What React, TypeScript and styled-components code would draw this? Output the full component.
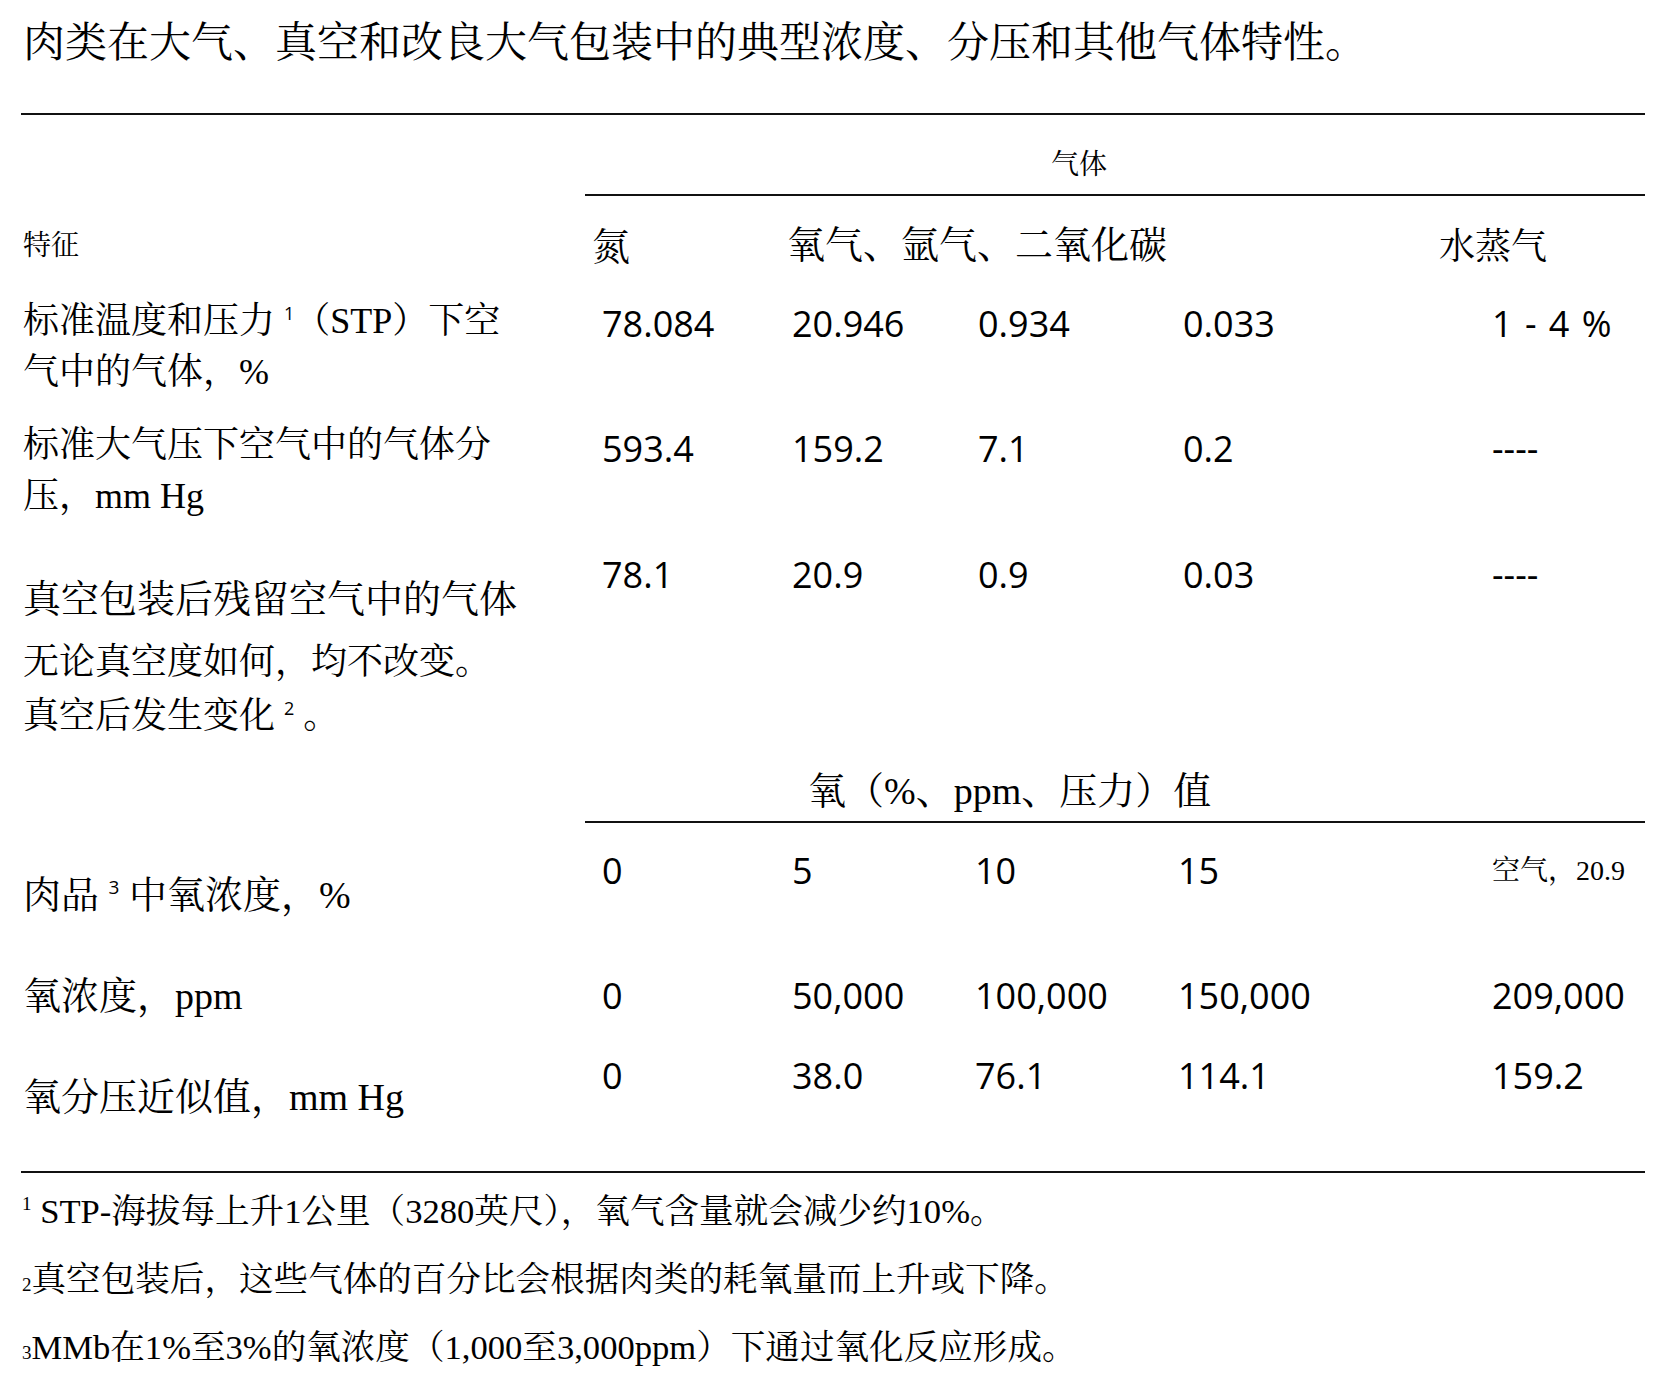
import React from 'react';
import styled, { createGlobalStyle } from 'styled-components';

const serif = `"Liberation Serif", "Noto Serif CJK SC", "Noto Sans CJK SC", serif`;
const sans = `"Open Sans", "Noto Sans", "Noto Sans CJK SC", sans-serif`;

const gasCols = '564px 190px 186px 205px 309px 1fr';
const oxygenCols = '564px 190px 183px 203px 314px 1fr';

const GlobalStyle = createGlobalStyle`
  html, body { margin: 0; background: #fff; }
  body { color: #000; font-family: ${serif}; }
`;

const Page = styled.div`
  width: 1624px;
  padding: 17px 0 0 21px;
`;

const Title = styled.h1`
  margin: 0;
  padding-left: 2px;
  font-weight: 400;
  font-size: 42px;
  line-height: 52px;
  white-space: nowrap;
`;

const Rule = styled.hr<{ $top: number; $indent?: number }>`
  margin: ${p => p.$top}px 0 0 ${p => p.$indent ?? 0}px;
  border: 0;
  height: 2px;
  background: #111;
`;

const GroupHeading = styled.div<{ $top: number; $indent: number; $size: number }>`
  margin-top: ${p => p.$top}px;
  padding-left: ${p => p.$indent}px;
  font-size: ${p => p.$size}px;
  line-height: ${p => (p.$size > 30 ? 50 : 40)}px;
  white-space: nowrap;
`;

const Row = styled.div<{ $h: number; $cols?: string }>`
  display: grid;
  grid-template-columns: ${p => p.$cols ?? gasCols};
  height: ${p => p.$h}px;
`;

const HeadRow = styled(Row)`
  grid-template-columns: 564px 190px 647px 1fr;
`;

const HeadCell = styled.div<{ $size: number; $pt: number; $pl: number }>`
  padding: ${p => p.$pt}px 0 0 ${p => p.$pl}px;
  font-size: ${p => p.$size}px;
  line-height: 50px;
  white-space: nowrap;
`;

const Label = styled.div<{ $pt: number; $size?: number }>`
  padding: ${p => p.$pt}px 0 0 2px;
  font-size: ${p => p.$size ?? 36}px;
  line-height: 51px;
  white-space: nowrap;
`;

const LabelLine = styled.span<{ $gap?: number; $size?: number }>`
  display: block;
  margin-top: ${p => p.$gap ?? 0}px;
  font-size: ${p => (p.$size ? `${p.$size}px` : 'inherit')};
`;

const Value = styled.div<{ $pt: number }>`
  padding: ${p => p.$pt}px 0 0 17px;
  font-family: ${sans};
  font-size: 36px;
  line-height: 50px;
  white-space: nowrap;
`;

const RangeValue = styled(Value)`
  word-spacing: 3px;
`;

const SmallValue = styled(Value)`
  font-family: ${serif};
  font-size: 28px;
`;

const Sup = styled.sup`
  font-family: ${sans};
  font-size: 0.5em;
  line-height: 0;
  vertical-align: super;
`;

const Footnotes = styled.div`
  margin-top: 4px;
`;

const Footnote = styled.p`
  margin: 0;
  padding-left: 1px;
  font-size: 34.6px;
  line-height: 68px;
  white-space: nowrap;
`;

const Mark = styled.span<{ $raised?: boolean }>`
  font-size: 0.55em;
  line-height: 0;
  vertical-align: ${p => (p.$raised ? 'super' : 'baseline')};
`;

export default function App() {
  return (
    <Page>
      <GlobalStyle />
      <Title>肉类在大气、真空和改良大气包装中的典型浓度、分压和其他气体特性。</Title>

      <Rule $top={44} />
      <GroupHeading $top={30} $indent={1030} $size={28}>气体</GroupHeading>
      <Rule $top={9} $indent={564} />

      <HeadRow $h={72}>
        <HeadCell $size={28} $pt={25} $pl={2}>特征</HeadCell>
        <HeadCell $size={38} $pt={26} $pl={7}>氮</HeadCell>
        <HeadCell $size={38} $pt={24} $pl={12}>氧气、氩气、二氧化碳</HeadCell>
        <HeadCell $size={36} $pt={26} $pl={17}>水蒸气</HeadCell>
      </HeadRow>

      <Row $h={124}>
        <Label $pt={28}>
          标准温度和压力 <Sup>1</Sup>（STP）下空<br />气中的气体，%
        </Label>
        <Value $pt={31}>78.084</Value>
        <Value $pt={31}>20.946</Value>
        <Value $pt={31}>0.934</Value>
        <Value $pt={31}>0.033</Value>
        <RangeValue $pt={31}>1 - 4 %</RangeValue>
      </Row>

      <Row $h={128}>
        <Label $pt={28}>
          标准大气压下空气中的气体分<br />压，mm Hg
        </Label>
        <Value $pt={32}>593.4</Value>
        <Value $pt={32}>159.2</Value>
        <Value $pt={32}>7.1</Value>
        <Value $pt={32}>0.2</Value>
        <Value $pt={32}>----</Value>
      </Row>

      <Row $h={223}>
        <Label $pt={54}>
          <LabelLine $size={38}>真空包装后残留空气中的气体</LabelLine>
          <LabelLine $gap={12}>无论真空度如何，均不改变。</LabelLine>
          <LabelLine $gap={3}>真空后发生变化 <Sup>2</Sup> 。</LabelLine>
        </Label>
        <Value $pt={30}>78.1</Value>
        <Value $pt={30}>20.9</Value>
        <Value $pt={30}>0.9</Value>
        <Value $pt={30}>0.03</Value>
        <Value $pt={30}>----</Value>
      </Row>

      <GroupHeading $top={23} $indent={787} $size={38}>氧（%、ppm、压力）值</GroupHeading>
      <Rule $top={5} $indent={564} />

      <Row $h={127} $cols={oxygenCols}>
        <Label $pt={47} $size={38}>
          肉品 <Sup>3</Sup> 中氧浓度，%
        </Label>
        <Value $pt={23}>0</Value>
        <Value $pt={23}>5</Value>
        <Value $pt={23}>10</Value>
        <Value $pt={23}>15</Value>
        <SmallValue $pt={23}>空气，20.9</SmallValue>
      </Row>

      <Row $h={80} $cols={oxygenCols}>
        <Label $pt={21} $size={38}>氧浓度，ppm</Label>
        <Value $pt={21}>0</Value>
        <Value $pt={21}>50,000</Value>
        <Value $pt={21}>100,000</Value>
        <Value $pt={21}>150,000</Value>
        <Value $pt={21}>209,000</Value>
      </Row>

      <Row $h={94} $cols={oxygenCols}>
        <Label $pt={42} $size={38}>氧分压近似值，mm Hg</Label>
        <Value $pt={21}>0</Value>
        <Value $pt={21}>38.0</Value>
        <Value $pt={21}>76.1</Value>
        <Value $pt={21}>114.1</Value>
        <Value $pt={21}>159.2</Value>
      </Row>

      <Rule $top={47} />

      <Footnotes>
        <Footnote>
          <Mark $raised>1</Mark> STP-海拔每上升1公里（3280英尺），氧气含量就会减少约10%。
        </Footnote>
        <Footnote>
          <Mark>2</Mark>真空包装后，这些气体的百分比会根据肉类的耗氧量而上升或下降。
        </Footnote>
        <Footnote>
          <Mark>3</Mark>MMb在1%至3%的氧浓度（1,000至3,000ppm）下通过氧化反应形成。
        </Footnote>
      </Footnotes>
    </Page>
  );
}
